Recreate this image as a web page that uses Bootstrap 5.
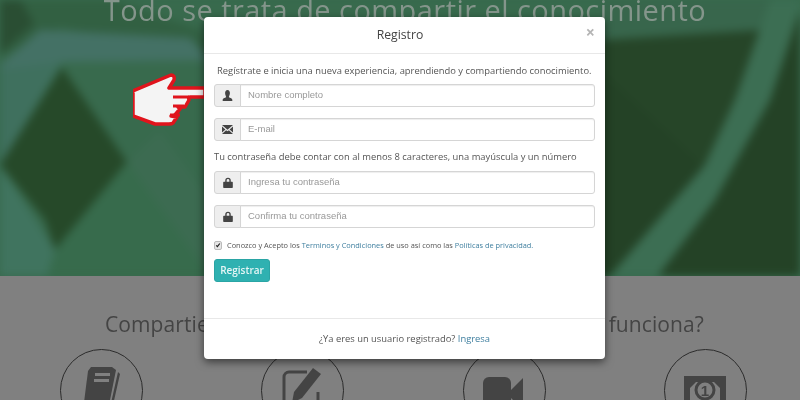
<!DOCTYPE html>
<html lang="es">
<head>
    <meta charset="UTF-8">
    <meta name="viewport" content="width=device-width, initial-scale=1.0">
    <title>Registro</title>
    <link href="https://cdn.jsdelivr.net/npm/bootstrap@5.3.0/dist/css/bootstrap.min.css" rel="stylesheet">
    <style>
        body { font-family: "Open Sans", "Liberation Sans", sans-serif; background: #808080; height: 400px; overflow: hidden; }
        .page-wrap { height: 400px; overflow: hidden; filter: blur(.4px); }
        .hero-area { height: 276px; background: #386a4d; overflow: hidden; }
        .hero-bg { inset: 0; filter: blur(4px); }
        .hero-title { font-size: 29px; line-height: 38px; margin-top: -9px; padding-left: 10px; color: #84958b; font-weight: 400; letter-spacing: .45px; }
        .info-area { height: 124px; overflow: hidden; }
        .info-title { font-size: 21px; line-height: 28px; padding-left: 9px; color: #444; font-weight: 400; letter-spacing: .1px; margin-top: 34px; margin-bottom: 11px; white-space: nowrap; }
        .step-row { width: 806px; padding-left: 1px; }
        .step-circle { width: 83px; height: 83px; border: 1.5px solid #2b2b2b; border-radius: 50%; }
        .reg-modal { left: 204px; top: 17px; width: 401px; height: 342px; background: #fff; border-radius: 4px; border: 0; box-shadow: 0 3px 8px rgba(0,0,0,.55); }
        .reg-modal .modal-header { height: 37px; padding: 0 19px 0 10px; border-bottom: 1px solid #e8e8e8; }
        .reg-title { font-size: 12.2px; color: #444; margin-top: 1px; }
        .reg-close { right: 10px; top: 7px; font-size: 16px; line-height: 16px; color: #b5b5b5; font-weight: 700; }
        .reg-body { padding: 10px 10px 0; font-size: 9.4px; color: #555; }
        .reg-intro { line-height: 14px; margin: 0 0 6px 3px; white-space: nowrap; }
        .reg-note { line-height: 14px; margin: -2px 0 7px; white-space: nowrap; }
        .reg-group { height: 23px; margin-bottom: 11px; }
        .reg-group .input-group-text { width: 27px; padding: 0; justify-content: center; background: #eee; border-color: #d5d5d5; border-radius: 3px 0 0 3px; }
        .reg-group .form-control { font-size: 9.5px; padding: 0 7px; background: #fff; border: 1px solid #d5d5d5; border-radius: 0 3px 3px 0; color: #555; min-height: 0; font-family: "Liberation Sans", sans-serif; box-shadow: inset 0 1px 1px rgba(0,0,0,.07); }
        .reg-group .form-control::placeholder { color: #999; }
        .reg-check { font-size: 7.4px; line-height: 12px; gap: 5px; white-space: nowrap; }
        .reg-check .form-check-input { width: 8px; height: 9px; margin: 0; flex: none; background-color: #e6e6e6; border: 1px solid #bbb; border-radius: 2px; background-image: url("data:image/svg+xml,%3csvg xmlns='http://www.w3.org/2000/svg' viewBox='0 0 20 20'%3e%3cpath fill='none' stroke='%23222' stroke-width='4' d='M4 11l4 4 8-10'/%3e%3c/svg%3e"); }
        .reg-link { color: #3f7f9f; text-decoration: none; }
        .reg-submit { display: block; width: 56px; height: 23px; margin-top: 8px; padding: 0; font-size: 10px; font-weight: 600; color: #e6f6f6; background: #2fb1b1; border: 1px solid #2aa5a5; border-radius: 3px; }
        .reg-foot { left: 0; right: 0; bottom: 0; height: 41px; border-top: 1px solid #e8e8e8; font-size: 9.4px; color: #555; }
        .hand-mark { left: 133px; top: 71px; }
        .bill-num { font: 700 15px "Liberation Sans", sans-serif; fill: #444; }
    </style>
</head>
<body>
<div class="page-wrap position-relative">
<div class="hero-area position-relative text-center">
    <svg class="hero-bg position-absolute" width="800" height="276" viewBox="0 0 800 276">
        <rect width="800" height="276" fill="#386a4d"/>
        <polygon points="-5,-5 100,-5 200,30 230,60 60,28 -5,60" fill="#326042"/>
        <polygon points="-5,-5 18,-5 34,24 -5,58" fill="#2a4e33"/>
        <polygon points="-5,70 40,30 190,38 210,60 62,62 -5,130" fill="#447165"/>
        <polygon points="-5,70 62,62 0,165 -5,170" fill="#3f705e"/>
        <polygon points="62,67 127,162 55,250 45,220 0,165" fill="#264929"/>
        <polygon points="0,165 55,250 45,285 -5,285" fill="#40745f"/>
        <polygon points="127,162 210,276 45,285 55,250" fill="#376b4c"/>
        <polygon points="127,162 160,130 210,200 210,276" fill="#3c6b51"/>
        <polygon points="600,40 765,28 735,100 705,165 605,276" fill="#264528"/>
        <polygon points="600,70 705,168 675,200 610,276 600,276" fill="#244226"/>
        <polygon points="600,-5 772,-5 763,30 600,40" fill="#38664c"/>
        <polygon points="772,-5 805,-5 770,100 715,200 655,280 608,280 675,200 705,165 735,100" fill="#3c6e53"/>
        <polygon points="805,-5 810,280 655,280 715,200 770,100" fill="#244226"/>
    </svg>
    <h1 class="hero-title position-relative">Todo se trata de compartir el conocimiento</h1>
</div>
<div class="info-area text-center">
    <h2 class="info-title">Compartiendo tu conocimiento ¿Quieres ver cómo funciona?</h2>
    <div class="step-row d-flex justify-content-around">
        <div class="step-circle d-flex justify-content-center pt-3">
            <svg width="42" height="50" viewBox="0 0 42 50" fill="#444"><path d="M10 1h21l4 3-8 40H2L7 5z"/><path d="M37 6l2 2-9 40H4v-2h24z"/><rect x="14" y="7" width="15" height="3" fill="#808080"/><rect x="13" y="13" width="15" height="3" fill="#808080"/></svg>
        </div>
        <div class="step-circle d-flex justify-content-center pt-3">
            <svg width="44" height="50" viewBox="0 0 44 50"><path d="M26 6H8a5 5 0 0 0-5 5v30a5 5 0 0 0 5 5h24a5 5 0 0 0 5-5V26" fill="none" stroke="#444" stroke-width="3"/><path d="M32 2l8 6-19 24-10 5 2-11z" fill="#444"/></svg>
        </div>
        <div class="step-circle d-flex justify-content-center pt-4">
            <svg width="42" height="40" viewBox="0 0 42 40" fill="#444"><rect x="0" y="3" width="28" height="34" rx="6"/><path d="M28 16L40 4v32L28 24z"/></svg>
        </div>
        <div class="step-circle d-flex justify-content-center pt-4">
            <svg width="46" height="40" viewBox="0 0 46 40"><path d="M2 2h42v36H2zM8 8v24h30V8z" fill="#444" fill-rule="evenodd"/><path d="M8 8h6l-6 6zM38 8h-6l6 6z" fill="#444"/><circle cx="23" cy="16" r="9" fill="none" stroke="#444" stroke-width="3"/><text class="bill-num" x="23" y="21.500" text-anchor="middle">1</text></svg>
        </div>
    </div>
</div>

<svg class="hand-mark position-absolute" width="76" height="58" viewBox="132 72 76 58">
    <path d="M170 76q4 0 3 5l-5 8h36v9h-15q-2 0-1 3l-4 7h-7l2 2-6 7h-3l6 1-4 6q-1 1-4 1h-14l-22-8V92z" fill="#f4f4f4" stroke="#e0141c" stroke-width="3.500" stroke-linejoin="round"/>
    <path d="M172 98h16M172 107h11M169 116h10" stroke="#e0141c" stroke-width="3" fill="none"/>
</svg>

<div class="modal-content reg-modal position-absolute">
    <div class="modal-header justify-content-center position-relative">
        <div class="reg-title">Registro</div>
        <span class="reg-close position-absolute">×</span>
    </div>
    <div class="reg-body">
        <p class="reg-intro">Regístrate e inicia una nueva experiencia, aprendiendo y compartiendo conocimiento.</p>
        <div class="input-group reg-group">
            <span class="input-group-text"><svg width="11" height="11" viewBox="0 0 16 16" fill="#444"><path d="M8 0c2.400 0 3.500 2 3.500 4.500S10.300 9 10 10c0 1 5 1.500 5 4v2H1v-2c0-2.500 5-3 5-4-.3-1-1.500-3-1.500-5.500S5.600 0 8 0z"/></svg></span>
            <input type="text" class="form-control" placeholder="Nombre completo">
        </div>
        <div class="input-group reg-group">
            <span class="input-group-text"><svg width="11" height="9" viewBox="0 0 16 13" fill="#444"><path d="M0 0h16L8 7zM0 2l5 4.500L0 11zM16 2v9l-5-4.500zM6 7.500l2 1.700 2-1.700 6 5.500H0z"/></svg></span>
            <input type="text" class="form-control" placeholder="E-mail">
        </div>
        <p class="reg-note">Tu contraseña debe contar con al menos 8 caracteres, una mayúscula y un número</p>
        <div class="input-group reg-group">
            <span class="input-group-text"><svg width="10" height="11" viewBox="0 0 14 16" fill="#444"><path d="M3 7V5a4 4 0 0 1 8 0v2h2a1 1 0 0 1 1 1v7a1 1 0 0 1-1 1H1a1 1 0 0 1-1-1V8a1 1 0 0 1 1-1zm2 0h4V5a2 2 0 0 0-4 0z"/></svg></span>
            <input type="password" class="form-control" placeholder="Ingresa tu contraseña">
        </div>
        <div class="input-group reg-group">
            <span class="input-group-text"><svg width="10" height="11" viewBox="0 0 14 16" fill="#444"><path d="M3 7V5a4 4 0 0 1 8 0v2h2a1 1 0 0 1 1 1v7a1 1 0 0 1-1 1H1a1 1 0 0 1-1-1V8a1 1 0 0 1 1-1zm2 0h4V5a2 2 0 0 0-4 0z"/></svg></span>
            <input type="password" class="form-control" placeholder="Confirma tu contraseña">
        </div>
        <div class="reg-check d-flex align-items-center">
            <input class="form-check-input" type="checkbox" checked>
            <span>Conozco y Acepto los <a class="reg-link" href="#">Terminos y Condiciones</a> de uso así como las <a class="reg-link" href="#">Políticas de privacidad.</a></span>
        </div>
        <button type="button" class="btn reg-submit">Registrar</button>
    </div>
    <div class="reg-foot position-absolute d-flex align-items-center justify-content-center">
        <span>¿Ya eres un usuario registrado? <a class="reg-link" href="#">Ingresa</a></span>
    </div>
</div>
</div>

<script src="https://cdn.jsdelivr.net/npm/bootstrap@5.3.0/dist/js/bootstrap.bundle.min.js"></script>
</body>
</html>
